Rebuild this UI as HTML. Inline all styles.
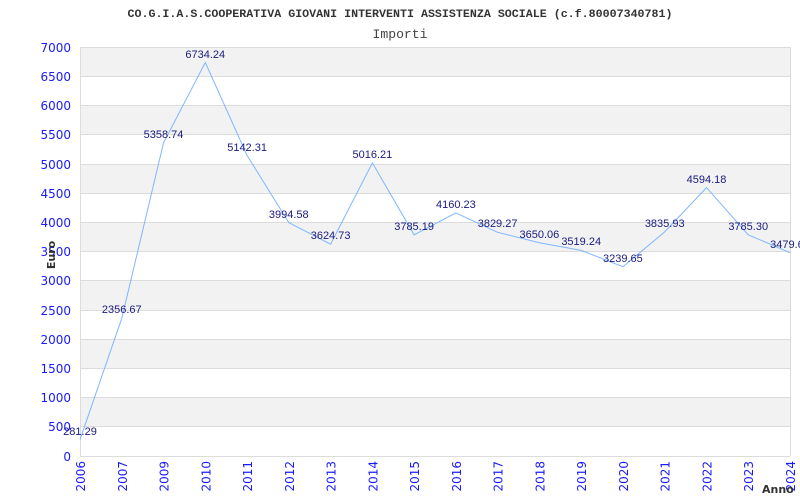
<!DOCTYPE html>
<html><head><meta charset="utf-8"><style>body{margin:0;background:#fff}svg{display:block}</style></head><body>
<svg width="800" height="500" xmlns="http://www.w3.org/2000/svg">
<rect width="800" height="500" fill="#fff"/>
<g fill="#f2f2f2">
<rect x="80" y="47" width="710" height="29.2"/>
<rect x="80" y="105.6" width="710" height="29.2"/>
<rect x="80" y="164" width="710" height="29.2"/>
<rect x="80" y="222.5" width="710" height="29.2"/>
<rect x="80" y="280.9" width="710" height="29.2"/>
<rect x="80" y="339.4" width="710" height="29.2"/>
<rect x="80" y="397.6" width="710" height="29.2"/>
</g>
<g stroke="#dcdcdc" stroke-width="1">
<line x1="80" x2="790" y1="47.5" y2="47.5"/><line x1="80" x2="790" y1="76.5" y2="76.5"/><line x1="80" x2="790" y1="105.5" y2="105.5"/><line x1="80" x2="790" y1="134.5" y2="134.5"/><line x1="80" x2="790" y1="164.5" y2="164.5"/><line x1="80" x2="790" y1="193.5" y2="193.5"/><line x1="80" x2="790" y1="222.5" y2="222.5"/><line x1="80" x2="790" y1="251.5" y2="251.5"/><line x1="80" x2="790" y1="280.5" y2="280.5"/><line x1="80" x2="790" y1="310.5" y2="310.5"/><line x1="80" x2="790" y1="339.5" y2="339.5"/><line x1="80" x2="790" y1="368.5" y2="368.5"/><line x1="80" x2="790" y1="397.5" y2="397.5"/><line x1="80" x2="790" y1="426.5" y2="426.5"/><line x1="80" x2="790" y1="456.5" y2="456.5"/>
<line x1="80.5" x2="80.5" y1="47" y2="456"/><line x1="790.5" x2="790.5" y1="47" y2="456"/>
</g>
<g font-family="'DejaVu Sans','Liberation Sans',sans-serif" font-size="12" fill="#1a1aff" text-anchor="end">
<text x="71" y="52">7000</text><text x="71" y="81">6500</text><text x="71" y="110">6000</text><text x="71" y="139">5500</text><text x="71" y="169">5000</text><text x="71" y="198">4500</text><text x="71" y="227">4000</text><text x="71" y="256">3500</text><text x="71" y="285">3000</text><text x="71" y="315">2500</text><text x="71" y="344">2000</text><text x="71" y="373">1500</text><text x="71" y="402">1000</text><text x="71" y="431">500</text><text x="71" y="461">0</text>
</g>
<g font-family="'DejaVu Sans','Liberation Sans',sans-serif" font-size="12" fill="#1a1aff" text-anchor="end">
<text transform="translate(85,461) rotate(-90)">2006</text>
<text transform="translate(126.8,461) rotate(-90)">2007</text>
<text transform="translate(168.5,461) rotate(-90)">2009</text>
<text transform="translate(210.3,461) rotate(-90)">2010</text>
<text transform="translate(252.1,461) rotate(-90)">2011</text>
<text transform="translate(293.8,461) rotate(-90)">2012</text>
<text transform="translate(335.6,461) rotate(-90)">2013</text>
<text transform="translate(377.4,461) rotate(-90)">2014</text>
<text transform="translate(419.1,461) rotate(-90)">2015</text>
<text transform="translate(460.9,461) rotate(-90)">2016</text>
<text transform="translate(502.6,461) rotate(-90)">2017</text>
<text transform="translate(544.4,461) rotate(-90)">2018</text>
<text transform="translate(586.2,461) rotate(-90)">2019</text>
<text transform="translate(627.9,461) rotate(-90)">2020</text>
<text transform="translate(669.7,461) rotate(-90)">2021</text>
<text transform="translate(711.5,461) rotate(-90)">2022</text>
<text transform="translate(753.2,461) rotate(-90)">2023</text>
<text transform="translate(795,461) rotate(-90)">2024</text>
</g>
<polyline fill="none" stroke="#7fb6ff" stroke-width="1" points="80,439.6 121.8,318.3 163.5,142.9 205.3,62.5 247.1,155.5 288.8,222.6 330.6,244.2 372.4,162.9 414.1,234.8 455.9,212.9 497.6,232.3 539.4,242.7 581.2,250.4 622.9,266.7 664.7,231.9 706.5,187.6 748.2,234.8 790,252.7"/>
<g font-family="'Liberation Sans',sans-serif" font-size="11" fill="#1a1a80" text-anchor="middle">
<text x="80" y="435">281.29</text>
<text x="121.8" y="313">2356.67</text>
<text x="163.5" y="138">5358.74</text>
<text x="205.3" y="58">6734.24</text>
<text x="247.1" y="151">5142.31</text>
<text x="288.8" y="218">3994.58</text>
<text x="330.6" y="239">3624.73</text>
<text x="372.4" y="158">5016.21</text>
<text x="414.1" y="230">3785.19</text>
<text x="455.9" y="208">4160.23</text>
<text x="497.6" y="227">3829.27</text>
<text x="539.4" y="238">3650.06</text>
<text x="581.2" y="245">3519.24</text>
<text x="622.9" y="262">3239.65</text>
<text x="664.7" y="227">3835.93</text>
<text x="706.5" y="183">4594.18</text>
<text x="748.2" y="230">3785.30</text>
<text x="790" y="248">3479.65</text>
</g>
<text x="400" y="17" text-anchor="middle" font-family="'Liberation Mono',monospace" font-size="11" font-weight="bold" fill="#333" textLength="545" lengthAdjust="spacingAndGlyphs">CO.G.I.A.S.COOPERATIVA GIOVANI INTERVENTI ASSISTENZA SOCIALE (c.f.80007340781)</text>
<text x="400" y="38" text-anchor="middle" font-family="'Liberation Mono',monospace" font-size="13" fill="#444" textLength="55" lengthAdjust="spacingAndGlyphs">Importi</text>
<text transform="translate(55,255) rotate(-90)" text-anchor="middle" font-family="'DejaVu Sans',sans-serif" font-size="11" font-weight="bold" fill="#333">Euro</text>
<text x="762" y="493" font-family="'DejaVu Sans',sans-serif" font-size="11" font-weight="bold" fill="#333">Anno</text>
</svg>
</body></html>
